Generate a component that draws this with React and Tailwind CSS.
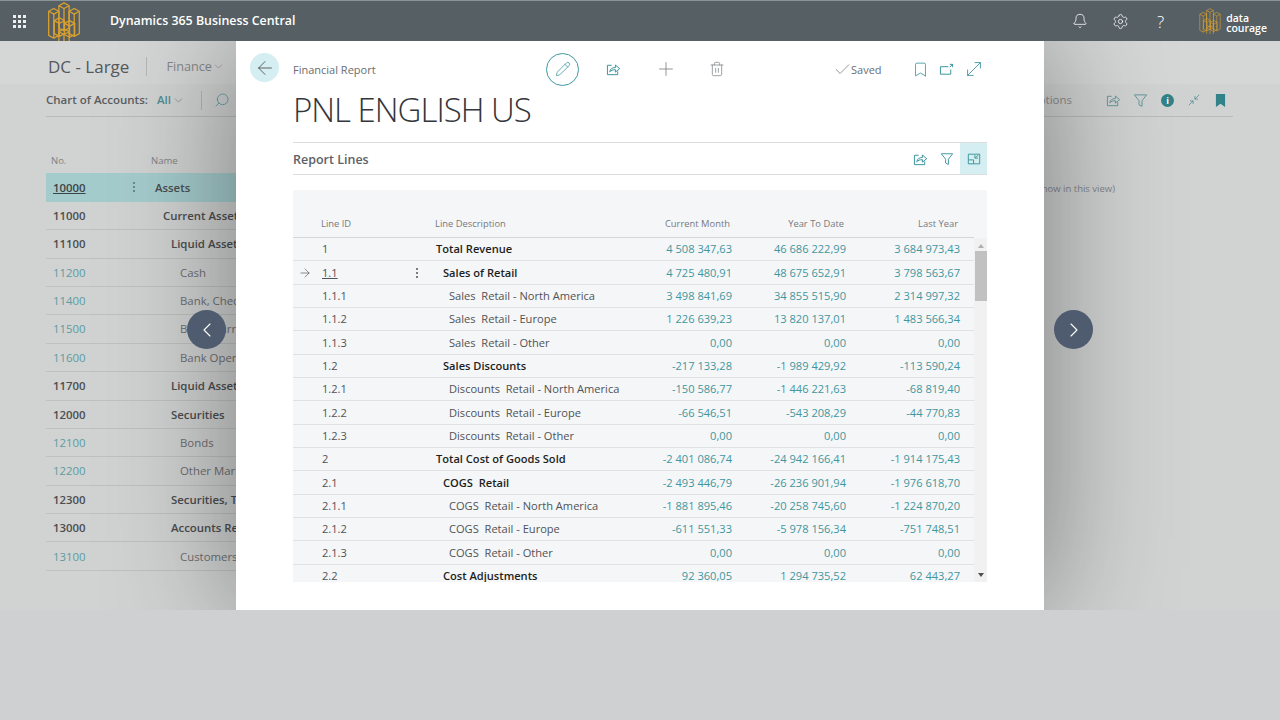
import {
  ArrowLeft,
  ArrowRight,
  Bell,
  Bookmark,
  Check,
  ChevronDown,
  ChevronLeft,
  ChevronRight,
  MoveDiagonal,
  Pencil,
  Plus,
  Search,
  Settings,
  Trash2,
} from "lucide-react";

const accounts = [
  { no: "10000", name: "Assets", indent: "pl-[7px]", bold: true, selected: true },
  { no: "11000", name: "Current Assets", indent: "pl-[15px]", bold: true },
  { no: "11100", name: "Liquid Assets", indent: "pl-[23px]", bold: true },
  { no: "11200", name: "Cash", indent: "pl-[32px]" },
  { no: "11400", name: "Bank, Checking", indent: "pl-[32px]" },
  { no: "11500", name: "Bank, Currency", indent: "pl-[32px]" },
  { no: "11600", name: "Bank Operations", indent: "pl-[32px]" },
  { no: "11700", name: "Liquid Assets, Total", indent: "pl-[23px]", bold: true },
  { no: "12000", name: "Securities", indent: "pl-[23px]", bold: true },
  { no: "12100", name: "Bonds", indent: "pl-[32px]" },
  { no: "12200", name: "Other Marketable", indent: "pl-[32px]" },
  { no: "12300", name: "Securities, Total", indent: "pl-[23px]", bold: true },
  { no: "13000", name: "Accounts Receivable", indent: "pl-[23px]", bold: true },
  { no: "13100", name: "Customers, Domestic", indent: "pl-[32px]" },
];

const lines = [
  ["1", "Total Revenue", 0, "4 508 347,63", "46 686 222,99", "3 684 973,43"],
  ["1.1", "Sales of Retail", 1, "4 725 480,91", "48 675 652,91", "3 798 563,67"],
  ["1.1.1", "Sales  Retail - North America", 2, "3 498 841,69", "34 855 515,90", "2 314 997,32"],
  ["1.1.2", "Sales  Retail - Europe", 2, "1 226 639,23", "13 820 137,01", "1 483 566,34"],
  ["1.1.3", "Sales  Retail - Other", 2, "0,00", "0,00", "0,00"],
  ["1.2", "Sales Discounts", 1, "-217 133,28", "-1 989 429,92", "-113 590,24"],
  ["1.2.1", "Discounts  Retail - North America", 2, "-150 586,77", "-1 446 221,63", "-68 819,40"],
  ["1.2.2", "Discounts  Retail - Europe", 2, "-66 546,51", "-543 208,29", "-44 770,83"],
  ["1.2.3", "Discounts  Retail - Other", 2, "0,00", "0,00", "0,00"],
  ["2", "Total Cost of Goods Sold", 0, "-2 401 086,74", "-24 942 166,41", "-1 914 175,43"],
  ["2.1", "COGS  Retail", 1, "-2 493 446,79", "-26 236 901,94", "-1 976 618,70"],
  ["2.1.1", "COGS  Retail - North America", 2, "-1 881 895,46", "-20 258 745,60", "-1 224 870,20"],
  ["2.1.2", "COGS  Retail - Europe", 2, "-611 551,33", "-5 978 156,34", "-751 748,51"],
  ["2.1.3", "COGS  Retail - Other", 2, "0,00", "0,00", "0,00"],
  ["2.2", "Cost Adjustments", 1, "92 360,05", "1 294 735,52", "62 443,27"],
];

const lineIndent = ["pl-0", "pl-[7px]", "pl-[13px]"];

function ShareIcon({ className }) {
  return (
    <svg viewBox="0 0 16 16" fill="none" stroke="currentColor" strokeWidth="1" className={className}>
      <path d="M6 3.5H1.5v10h11V10" />
      <path d="M4 10.5c.4-3 2.6-4.6 6-4.6V3.2l4.6 3.9-4.6 3.7V8.2c-2.6 0-4.6.6-6 2.3z" strokeLinejoin="round" />
    </svg>
  );
}

function FunnelIcon({ className }) {
  return (
    <svg viewBox="0 0 16 16" fill="none" stroke="currentColor" strokeWidth="1" className={className}>
      <path d="M1.5 2h13L9.6 8.2v6L6.4 12.6V8.2z" strokeLinejoin="round" />
    </svg>
  );
}

function CubeLogo({ className, strokeWidth = 1.2 }) {
  // isometric blocks: x, top y, height
  const blocks = [
    [20, 3, 24],
    [9, 9, 26],
    [31, 9, 24],
    [15, 19, 14],
    [26, 22, 12],
    [20, 31, 11],
  ];
  return (
    <svg viewBox="3 2 34 42" fill="none" stroke="#d9a02f" strokeWidth={strokeWidth} strokeLinejoin="round" className={className}>
      {blocks.map(([x, y, h]) => (
        <g key={`${x}-${y}`}>
          <path d={`M${x} ${y}l5.500 3-5.500 3-5.500-3z`} />
          <path d={`M${x - 5.5} ${y + 3}v${h}l5.500 3 5.500-3v-${h}M${x} ${y + 6}v${h}`} />
        </g>
      ))}
    </svg>
  );
}

function GridDots() {
  return (
    <div className="grid w-fit grid-cols-[repeat(3,3px)] gap-[2px]">
      {Array.from({ length: 9 }).map((_, i) => (
        <span key={i} className="w-[3px] h-[3px] bg-[#eceeef]" />
      ))}
    </div>
  );
}

function Dots({ tone }) {
  return (
    <div className="flex flex-col gap-[2px]">
      <span className={`w-[2px] h-[2px] rounded-full ${tone}`} />
      <span className={`w-[2px] h-[2px] rounded-full ${tone}`} />
      <span className={`w-[2px] h-[2px] rounded-full ${tone}`} />
    </div>
  );
}

function TopBar() {
  return (
    <header className="h-[41px] shrink-0 bg-[#565f64] border-t border-[#8d9497] flex items-center text-white">
      <div className="w-[37px] pl-[13px]">
        <GridDots />
      </div>
      <CubeLogo className="w-[36px] h-[39px] ml-[9px]" strokeWidth={1.4} />
      <span className="ml-[28px] text-[12.4px] font-semibold">Dynamics 365 Business Central</span>
      <div className="ml-auto flex items-center">
        <Bell size={16} strokeWidth={1.2} />
        <Settings size={17} strokeWidth={1.1} className="ml-[24px]" />
        <span className="ml-[28px] text-[17px] font-light leading-none">?</span>
        <CubeLogo className="w-[24px] h-[26px] ml-[34px]" strokeWidth={1} />
        <div className="ml-[4px] mr-[13px] pt-[4px] text-[10.500px] font-semibold leading-[10px]">
          <div>data</div>
          <div>courage</div>
        </div>
      </div>
    </header>
  );
}

function BackgroundPage() {
  return (
    <div className="h-[569px] bg-[#d1d2d2]">
      <div className="h-[43px] pt-[8px] pl-[48px] bg-[#d5d6d6] flex items-center text-[#55595b]">
        <span className="text-[17px] font-medium">DC - Large</span>
        <span className="ml-[17px] w-px h-[19px] bg-[#b4b5b5]" />
        <span className="ml-[19px] text-[12.7px] text-[#85898a]">Finance</span>
        <ChevronDown size={13} strokeWidth={1} className="text-[#85898a]" />
      </div>
      <div className="ml-[46px] mr-[47px] h-[33px] pr-[7px] border-b border-[#b9baba] flex items-center text-[#5a5e60]">
        <span className="text-[11.5px] font-semibold">Chart of Accounts:</span>
        <span className="ml-[9px] text-[11.5px] font-semibold text-[#4f8f95]">All</span>
        <ChevronDown size={13} strokeWidth={1} className="ml-[1px] text-[#6b7071]" />
        <span className="ml-[16px] w-px h-[19px] bg-[#b4b5b5]" />
        <Search size={16} strokeWidth={1.2} className="ml-[12px] text-[#4f9aa0] -scale-x-100" />
        <span className="ml-auto text-[11.5px] text-[#8a8d8e]">Options</span>
        <ShareIcon className="ml-[34px] w-[15px] h-[15px] text-[#5f9499]" />
        <FunnelIcon className="ml-[12px] w-[15px] h-[15px] text-[#5f9499]" />
        <span className="ml-[13px] w-[13px] h-[13px] rounded-full bg-[#328389] text-white text-[9px] font-bold leading-[13px] text-center">i</span>
        <svg viewBox="0 0 16 16" fill="none" stroke="currentColor" strokeWidth="1" className="ml-[13px] w-[14px] h-[14px] text-[#5f9499]">
          <path d="M2 14l5-5M3.500 9H7v3.500M14 2L9 7M12.500 7H9V3.500" />
        </svg>
        <svg viewBox="0 0 12 16" className="ml-[14px] w-[11px] h-[15px] text-[#328389]" fill="currentColor">
          <path d="M1 1h10v14l-5-3.500L1 15z" />
        </svg>
      </div>
      <div className="ml-[46px] mr-[47px] flex">
        <div className="w-[190px] shrink-0">
          <div className="h-[56.4px] flex items-end pb-[5px] text-[9.500px] text-[#808384]">
            <span className="ml-[5px] w-[100px]">No.</span>
            <span>Name</span>
          </div>
          {accounts.map((a) => (
            <div
              key={a.no}
              className={`h-[28.4px] flex items-center text-[11.4px] whitespace-nowrap overflow-hidden border-b ${
                a.selected ? "bg-[#a5cccd] border-[#a5cccd]" : "border-[#bfc0c0]"
              }`}
            >
              <span className={`ml-[7px] w-[80px] shrink-0 ${a.selected ? "font-semibold underline text-[#3f4446]" : a.bold ? "font-semibold text-[#4b4e50]" : "text-[#5b9da3]"}`}>
                {a.no}
              </span>
              <span className="w-[15px] shrink-0">{a.selected && <Dots tone="bg-[#5d7576]" />}</span>
              <span className={`${a.indent} ${a.bold ? "font-semibold text-[#4b4e50]" : "text-[#6d7072]"}`}>{a.name}</span>
            </div>
          ))}
        </div>
        <div className="ml-auto mr-[118px] mt-[65px] text-[9.500px] text-[#85888a]">(show in this view)</div>
      </div>
    </div>
  );
}

function ReportLine({ line }) {
  const [id, desc, level, month, ytd, last] = line;
  const active = id === "1.1";
  return (
    <div className="grid grid-cols-[29px_114px_186px_110px_114px_114px_14px] h-[23.33px] pt-[1px] items-center border-b border-[#dfe1e3] text-[11.1px] whitespace-pre shrink-0">
      <span className="pl-[5px] text-[#444]">{active && <ArrowRight size={14} strokeWidth={1} />}</span>
      <span className={`flex items-center justify-between pr-[18px] text-[#505356] ${active ? "underline" : ""}`}>
        {id}
        {active && <Dots tone="bg-[#505356]" />}
      </span>
      <span className={`${lineIndent[level]} ${level < 2 ? "font-semibold text-[#1d1f21]" : "text-[#505356]"}`}>{desc}</span>
      <span className="text-right text-[#3f979e]">{month}</span>
      <span className="text-right text-[#3f979e]">{ytd}</span>
      <span className="text-right text-[#3f979e]">{last}</span>
    </div>
  );
}

function ReportModal() {
  return (
    <div className="absolute left-[236px] top-0 w-[808px] h-[569px] bg-white shadow-[0_0_120px_rgba(0,0,0,0.42)] pl-[57px] pr-[57px]">
      <div className="absolute left-[14px] top-[12px] w-[29px] h-[29px] rounded-full bg-[#d5eef1] flex items-center justify-center text-[#555]">
        <ArrowLeft size={22} strokeWidth={1} />
      </div>
      <div className="h-[56px] flex items-center text-[#2f8f98]">
        <span className="w-[253px] pt-[2px] text-[11px] text-[#6a6e72]">Financial Report</span>
        <span className="w-[33px] h-[33px] rounded-full border border-[#3a9aa3] flex items-center justify-center">
          <Pencil size={16} strokeWidth={1.1} />
        </span>
        <ShareIcon className="ml-[27px] w-[15px] h-[15px]" />
        <Plus size={22} strokeWidth={0.9} className="ml-[34px] text-[#7b8083]" />
        <Trash2 size={16} strokeWidth={1.1} className="ml-[32px] text-[#7b8083]" />
        <Check size={19} strokeWidth={0.9} className="ml-[108px] text-[#6a6e72]" />
        <span className="-ml-[1px] pt-[2px] text-[11px] text-[#6a6e72]">Saved</span>
        <Bookmark size={17} strokeWidth={1.1} className="ml-[30px]" />
        <svg viewBox="0 0 16 16" fill="none" stroke="currentColor" strokeWidth="1" className="ml-[10px] w-[15px] h-[15px]">
          <path d="M10 5H1.500v8h11V8M11.500 2.500h3v3M14.500 2.500l-3 3" />
        </svg>
        <MoveDiagonal size={22} strokeWidth={0.9} className="ml-[9px]" />
      </div>
      <h1 className="h-[45px] text-[33px] leading-[26px] font-light text-[#33363a] tracking-[-1px] whitespace-nowrap">PNL ENGLISH US</h1>
      <div className="h-[33px] border-y border-[#dcdddf] flex items-center text-[#2f8f98]">
        <span className="pt-[3px] text-[12.5px] font-semibold text-[#5c6267]">Report Lines</span>
        <ShareIcon className="ml-auto mt-[1px] w-[15px] h-[15px]" />
        <FunnelIcon className="ml-[12px] mt-[1px] w-[14px] h-[14px]" />
        <span className="ml-[6px] w-[27px] h-[31px] bg-[#d5eef1] flex items-center justify-center">
          <svg viewBox="0 0 16 16" fill="none" stroke="currentColor" strokeWidth="1" className="w-[14px] h-[14px]">
            <path d="M1.500 2.500h13v11h-13zM1.500 9h6v4.500M9 3.500v3.500h3.500M13 3.500L9.500 6.500" />
          </svg>
        </span>
      </div>
      <div className="mt-[15px] h-[392px] bg-[#f5f6f8] overflow-hidden relative">
        <div className="h-[48px] grid grid-cols-[29px_114px_186px_110px_114px_114px_14px] items-end pb-[6px] w-[681px] border-b border-[#d4d6d8] text-[9.4px] text-[#75797d]">
          <span />
          <span className="-ml-[1px]">Line ID</span>
          <span className="-ml-[1px]">Line Description</span>
          <span className="text-right pr-[2px]">Current Month</span>
          <span className="text-right pr-[2px]">Year To Date</span>
          <span className="text-right pr-[2px]">Last Year</span>
          <span />
        </div>
        <div className="w-[681px] flex flex-col">
          {lines.map((l) => (
            <ReportLine key={l[0]} line={l} />
          ))}
        </div>
        <div className="absolute right-0 top-[48px] bottom-0 w-[13px] bg-[#f1f1f1] flex flex-col items-center">
          <span className="mt-[6px] w-0 h-0 border-x-[3px] border-x-transparent border-b-[4px] border-b-[#b0b0b0]" />
          <span className="mt-[3px] w-[12px] h-[50px] bg-[#c1c1c1]" />
          <span className="mt-auto mb-[5px] w-0 h-0 border-x-[3px] border-x-transparent border-t-[4px] border-t-[#505050]" />
        </div>
      </div>
    </div>
  );
}

export default function App() {
  return (
    <div className="relative w-[1280px] h-[720px] overflow-hidden bg-[#cfd0d2] flex flex-col font-['Open_Sans',sans-serif]">
      <TopBar />
      <div className="relative h-[569px] shrink-0 overflow-hidden">
        <BackgroundPage />
        <ReportModal />
      </div>
      <button className="absolute left-[187px] top-[310px] w-[39px] h-[39px] rounded-full bg-[#4f5b6e] text-white flex items-center justify-center">
        <ChevronLeft size={24} strokeWidth={1.1} />
      </button>
      <button className="absolute left-[1054px] top-[310px] w-[39px] h-[39px] rounded-full bg-[#4f5b6e] text-white flex items-center justify-center">
        <ChevronRight size={24} strokeWidth={1.1} />
      </button>
    </div>
  );
}
